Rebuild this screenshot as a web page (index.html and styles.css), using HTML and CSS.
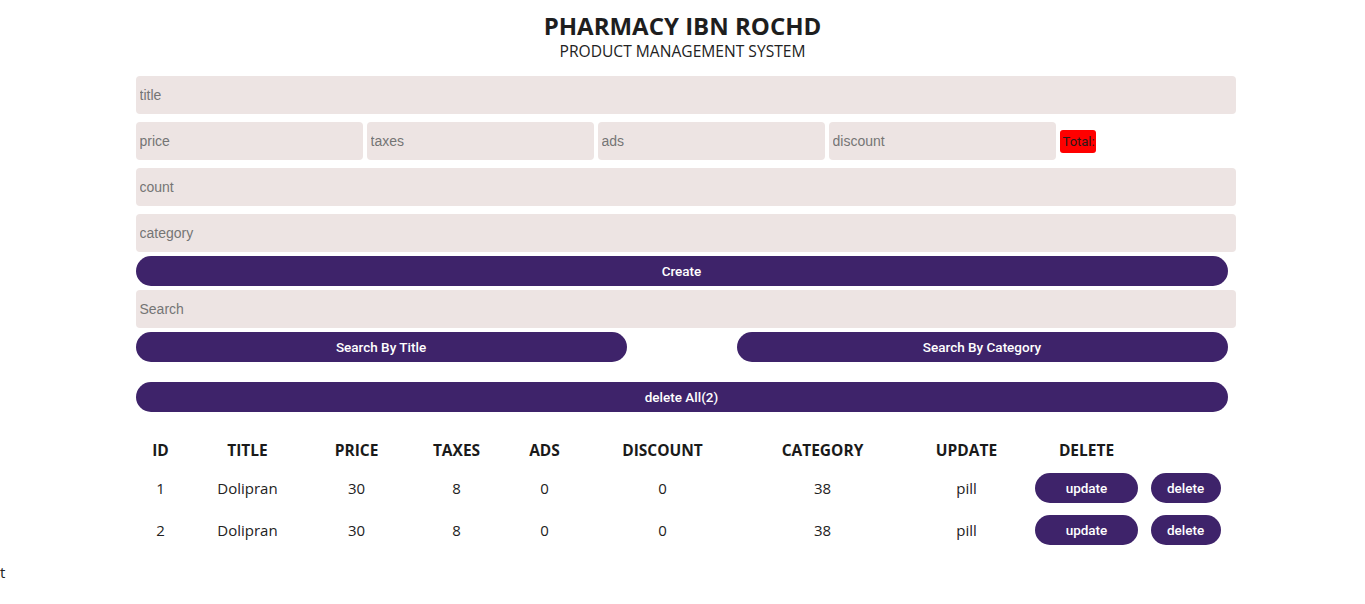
FILE: index.html
```html
<!DOCTYPE html>
<html>
<head>
<meta charset="utf-8">
<link rel="stylesheet" href="styles.css">
</head>
<body>
<header class="head">
  <h2>PHARMACY IBN ROCHD</h2>
  <p>PRODUCT MANAGEMENT SYSTEM</p>
</header>
<div class="crud">
  <div class="inputs">
    <input class="f-title" type="text" placeholder="title">
    <div class="price">
      <input type="number" placeholder="price">
      <input type="number" placeholder="taxes">
      <input type="number" placeholder="ads">
      <input type="number" placeholder="discount">
      <small class="total">Total:</small>
    </div>
    <input class="f-count" type="number" placeholder="count">
    <input class="f-cat" type="text" placeholder="category">
    <button class="btn create">Create</button>
  </div>
  <div class="outputs">
    <div class="search-block">
      <input class="f-search" type="text" placeholder="Search">
      <div class="btn-search">
        <button class="btn half">Search By Title</button>
        <button class="btn half">Search By Category</button>
      </div>
    </div>
    <div class="delete-all">
      <button class="btn">delete All(2)</button>
    </div>
    <table>
      <colgroup>
        <col class="c1"><col class="c2"><col class="c3"><col class="c4"><col class="c5"><col class="c6"><col class="c7"><col class="c8"><col class="c9"><col class="c10">
      </colgroup>
      <thead>
        <tr>
          <th>ID</th><th>TITLE</th><th>PRICE</th><th>TAXES</th><th>ADS</th><th>DISCOUNT</th><th>CATEGORY</th><th>UPDATE</th><th>DELETE</th>
        </tr>
      </thead>
      <tbody>
        <tr>
          <td>1</td><td>Dolipran</td><td>30</td><td>8</td><td>0</td><td>0</td><td>38</td><td>pill</td>
          <td><button class="btn sm up">update</button></td><td><button class="btn sm del">delete</button></td>
        </tr>
        <tr>
          <td>2</td><td>Dolipran</td><td>30</td><td>8</td><td>0</td><td>0</td><td>38</td><td>pill</td>
          <td><button class="btn sm up">update</button></td><td><button class="btn sm del">delete</button></td>
        </tr>
      </tbody>
    </table>
  </div>
</div>
<div class="stray">t</div>
</body>
</html>
```
FILE: styles.css
```css
* { box-sizing: border-box; }
body {
  margin: 0;
  background: #fff;
  font-family: "Open Sans", "Noto Sans", sans-serif;
  color: #222;
}
.head {
  text-align: center;
  padding-top: 12px;
  margin-bottom: 14px;
}
.head h2 {
  margin: 0;
  font-size: 24px;
  font-weight: 700;
  line-height: 28px;
  color: #1e1e1e;
}
.head p {
  margin: 0;
  font-size: 15.6px;
  line-height: 22px;
  color: #222;
}
.crud {
  width: 1100px;
  margin: 0 auto;
  position: relative;
  left: 3px;
}
input {
  display: block;
  width: 100%;
  height: 38px;
  margin: 0;
  border: none;
  outline: none;
  border-radius: 4px;
  background: #ede4e3;
  padding: 0 4px;
  font-family: "Liberation Sans", Arial, sans-serif;
  font-size: 14px;
  color: #333;
}
input::placeholder { color: #757575; }
.price {
  display: flex;
  align-items: center;
  gap: 4px;
  margin: 8px 0;
}
.price input {
  width: 227px;
}
.f-count { margin-bottom: 8px; }
.total {
  display: inline-block;
  background: #ff0000;
  color: #2a1a1a;
  border-radius: 3px;
  padding: 3px 1px 3px 3px;
  font-family: "Roboto", sans-serif;
  font-size: 13px;
  line-height: 17px;
}
.btn {
  display: block;
  width: 1092px;
  height: 30px;
  border: none;
  border-radius: 15px;
  background: #3e236a;
  color: #fff;
  font-family: "Roboto", "Liberation Sans", sans-serif;
  font-size: 13.5px;
  font-weight: 500;
  cursor: pointer;
}
.btn.create { margin: 4px 0; }
.btn-search {
  display: flex;
  justify-content: space-between;
  width: 1092px;
  margin-top: 4px;
}
.btn.half { width: 491px; }
.delete-all { margin: 20px 0 20px; }
table {
  table-layout: fixed;
  border-collapse: collapse;
  width: 1096px;
  text-align: center;
}
.c1 { width: 50px; } .c2 { width: 124px; } .c3 { width: 94px; } .c4 { width: 106px; }
.c5 { width: 70px; } .c6 { width: 166px; } .c7 { width: 154px; } .c8 { width: 134px; }
.c9 { width: 106px; } .c10 { width: 92px; }
th {
  font-size: 15.5px;
  font-weight: 700;
  color: #1a1a1a;
  height: 35px;
  padding: 0;
}
td {
  font-size: 15px;
  color: #222;
  height: 42px;
  padding: 0;
}
.btn.sm {
  display: inline-block;
  height: 30px;
  vertical-align: middle;
}
.btn.up { width: 103px; }
.btn.del { width: 70px; }
.stray {
  font-size: 15px;
  line-height: 20px;
  margin-top: 11px;
  color: #222;
}
```
